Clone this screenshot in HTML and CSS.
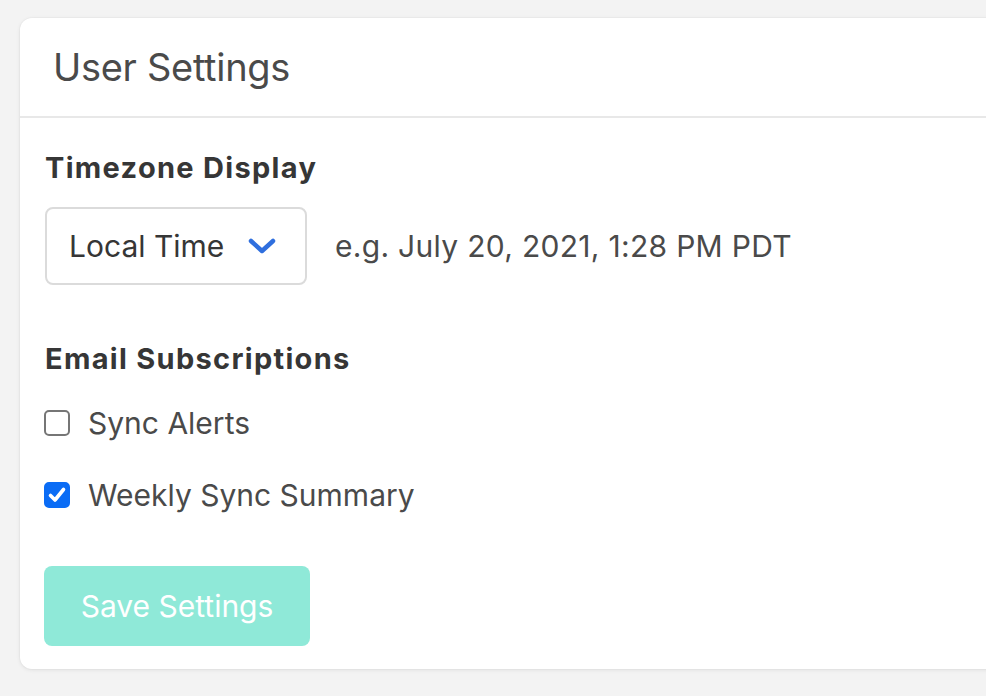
FILE: index.html
```html
<!DOCTYPE html>
<html lang="en">
<head>
<meta charset="utf-8">
<title>User Settings</title>
<link rel="stylesheet" href="styles.css">
</head>
<body>
<div class="card">
  <header class="card-header">
    <h1 class="card-title">User Settings</h1>
  </header>
  <div class="card-body">
    <h2 class="label">Timezone Display</h2>
    <div class="tz-row">
      <div class="select">
        <span class="select-value">Local Time</span>
        <svg class="chevron" width="28" height="16" viewBox="0 0 28 16" aria-hidden="true"><path d="M3 3 L14 13 L25 3" fill="none" stroke="#2f6fde" stroke-width="4.5" stroke-linecap="round" stroke-linejoin="round"/></svg>
      </div>
      <span class="example">e.g. July 20, 2021, 1:28 PM PDT</span>
    </div>
    <h2 class="label label-email">Email Subscriptions</h2>
    <label class="check-row">
      <span class="box"></span>
      <span class="check-text">Sync Alerts</span>
    </label>
    <label class="check-row check-row-2">
      <span class="box box-checked">
        <svg width="22" height="22" viewBox="0 0 22 22" aria-hidden="true"><path d="M4.5 11.5 L9 16 L17.5 5.5" fill="none" stroke="#fff" stroke-width="3.6" stroke-linecap="round" stroke-linejoin="round"/></svg>
      </span>
      <span class="check-text">Weekly Sync Summary</span>
    </label>
    <button class="btn-save" type="button">Save Settings</button>
  </div>
</div>
</body>
</html>
```
FILE: styles.css
```css
html, body {
  margin: 0;
  padding: 0;
}
body {
  background: #f3f3f3;
  font-family: Inter, "Noto Sans", sans-serif;
  color: #4a4a4a;
  width: 986px;
  height: 696px;
  overflow: hidden;
  padding: 18px 0 0 20px;
  box-sizing: border-box;
}
.card {
  width: 1000px;
  background: #fff;
  border-radius: 12px;
  box-shadow: 0 1px 4px rgba(0,0,0,0.08), 0 0 0 1px rgba(0,0,0,0.02);
}
.card-header {
  height: 98px;
  border-bottom: 2px solid #e8e8e8;
  display: flex;
  align-items: center;
  padding-left: 33px;
}
.card-title {
  margin: 0;
  font-size: 38px;
  font-weight: 400;
  color: #4a4a4a;
  letter-spacing: -0.3px;
}
.card-body {
  padding: 30px 0 23px 25px;
  display: flex;
  flex-direction: column;
  align-items: flex-start;
}
.label {
  margin: 0;
  font-size: 29px;
  line-height: 40px;
  font-weight: 700;
  color: #363636;
  letter-spacing: 1.3px;
}
.tz-row {
  margin-top: 19px;
  display: flex;
  align-items: center;
  gap: 28px;
}
.select {
  box-sizing: border-box;
  width: 262px;
  height: 78px;
  border: 2px solid #dbdbdb;
  border-radius: 8px;
  display: flex;
  align-items: center;
  padding-left: 22px;
  gap: 24px;
}
.select-value {
  font-size: 30px;
  color: #363636;
}
.chevron {
  display: block;
}
.example {
  font-size: 30px;
  color: #4a4a4a;
  letter-spacing: 0.3px;
}
.label-email {
  margin-top: 54px;
}
.check-row {
  display: flex;
  align-items: center;
  height: 40px;
  margin-top: 24px;
  gap: 18px;
}
.check-row-2 {
  margin-top: 32px;
}
.box {
  box-sizing: border-box;
  width: 26px;
  height: 26px;
  border: 2px solid #767676;
  border-radius: 5px;
  display: flex;
  align-items: center;
  justify-content: center;
  margin-left: -1px;
}
.box-checked {
  background: #0a6cf5;
  border-color: #0a6cf5;
}
.check-text {
  font-size: 30px;
  color: #4a4a4a;
}
.btn-save {
  margin-top: 51px;
  margin-left: -1px;
  width: 266px;
  height: 80px;
  border: none;
  border-radius: 8px;
  background: #8fe9d8;
  color: #fff;
  font-family: inherit;
  font-size: 30px;
  padding: 0;
}
```
